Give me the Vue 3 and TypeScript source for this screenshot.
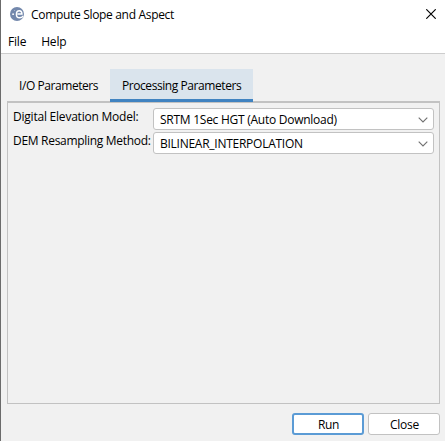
<script setup lang="ts">
import { ref } from 'vue'

interface Field {
  id: string
  label: string
  value: string
}

const tabs = ['I/O Parameters', 'Processing Parameters']
const activeTab = ref(1)
const fields: Field[] = [
  { id: 'dem', label: 'Digital Elevation Model:', value: 'SRTM 1Sec HGT (Auto Download)' },
  { id: 'resampling', label: 'DEM Resampling Method:', value: 'BILINEAR_INTERPOLATION' },
]
</script>

<template>
  <div class="dialog">
    <header class="titlebar">
      <svg class="logo" width="14" height="14" viewBox="0 0 14 14">
        <circle cx="7" cy="7" r="7" fill="#7388ac" />
        <path d="M7.4 7H12C11.9 5 11 3.7 9.4 3.7C7.5 3.7 6.4 5.2 6.4 7.2C6.4 9.4 7.7 10.8 9.6 10.8C11.2 10.8 12.3 10.2 13.2 9" fill="none" stroke="#fff" stroke-width="1.4" />
        <circle cx="3.1" cy="7.2" r=".9" fill="#fff" />
        <circle cx="4.6" cy="3.6" r=".5" fill="#b9c4d8" />
      </svg>
      <span class="title">Compute Slope and Aspect</span>
      <svg class="close-icon" width="10" height="10" viewBox="0 0 10 10">
        <path d="M.3.3 9.7 9.7M9.7.3.3 9.7" stroke="#000" stroke-width="1.15" />
      </svg>
    </header>
    <nav class="menu">
      <span class="file">File</span>
      <span class="help">Help</span>
    </nav>
    <main class="content">
      <div class="tabs">
        <div v-for="(tab, i) in tabs" :key="tab" class="tab" :class="{ active: i === activeTab }" @click="activeTab = i">
          <span>{{ tab }}</span>
        </div>
      </div>
      <section class="panel">
        <div v-for="field in fields" :key="field.id" class="row" :class="field.id">
          <span class="label">{{ field.label }}</span>
          <div class="combo">
            <span class="value">{{ field.value }}</span>
            <svg width="10" height="6" viewBox="0 0 10 6">
              <path d="M.7.7 5 5 9.3.7" fill="none" stroke="#707070" stroke-width="1.1" />
            </svg>
          </div>
        </div>
      </section>
    </main>
    <footer class="actions">
      <button class="run">Run</button>
      <button class="close">Close</button>
    </footer>
  </div>
</template>

<style>
body {
  margin: 0;
}
</style>

<style scoped>
.dialog {
  box-sizing: border-box;
  width: 445px;
  height: 441px;
  display: flex;
  flex-direction: column;
  border-left: 1px solid #6b6b6b;
  background: #f1f1f1;
  color: #000;
  font: 12px/16px "Open Sans", "Noto Sans", sans-serif;
  white-space: nowrap;
  overflow: hidden;
}
.titlebar {
  height: 29px;
  box-sizing: border-box;
  display: flex;
  align-items: center;
  padding: 0 9px;
  background: #fff;
}
.logo {
  margin-top: -1px;
}
.title {
  margin-left: 7px;
  letter-spacing: -0.32px;
}
.close-icon {
  margin-left: auto;
  margin-top: -1px;
}
.menu {
  height: 25px;
  box-sizing: border-box;
  display: flex;
  align-items: center;
  gap: 15px;
  padding: 1px 0 0 7px;
  background: #fff;
  border-bottom: 1px solid #cdcdcd;
  letter-spacing: -0.2px;
}
.content {
  padding: 15px 5px 0 6px;
}
.tabs {
  display: flex;
  height: 32px;
  letter-spacing: -0.43px;
}
.tab {
  box-sizing: border-box;
  width: 103px;
  padding: 9px 0 0 12px;
}
.tab.active {
  position: relative;
  width: 143px;
  height: 33px;
  background: #dae4ed;
  border-bottom: 3px solid #4083c1;
}
.panel {
  box-sizing: border-box;
  height: 303px;
  padding: 5px 5px 6px;
  border: 1px solid #c2c2c2;
  border-top-width: 2px;
  display: flex;
  flex-direction: column;
  gap: 2px;
}
.row {
  display: grid;
  grid-template-columns: 140px 281px;
  height: 22px;
}
.label {
  padding-top: 1px;
  letter-spacing: -0.22px;
}
.resampling .label {
  letter-spacing: -0.3px;
}
.combo {
  box-sizing: border-box;
  display: flex;
  align-items: center;
  justify-content: space-between;
  height: 22px;
  padding: 1px 5px 0 6px;
  background: #fff;
  border: 1px solid #c2c2c2;
  border-radius: 3px;
  letter-spacing: -0.26px;
}
.actions {
  display: flex;
  justify-content: flex-end;
  gap: 4px;
  padding: 9px 5px 0 0;
}
.actions button {
  box-sizing: border-box;
  width: 72px;
  height: 22px;
  padding: 1px 0 0 1px;
  border: 1px solid #c2c2c2;
  border-radius: 3px;
  background: #fff;
  color: #000;
  font: inherit;
  letter-spacing: -0.3px;
}
.actions .run {
  border: 2px solid #5b9bd5;
}
</style>
